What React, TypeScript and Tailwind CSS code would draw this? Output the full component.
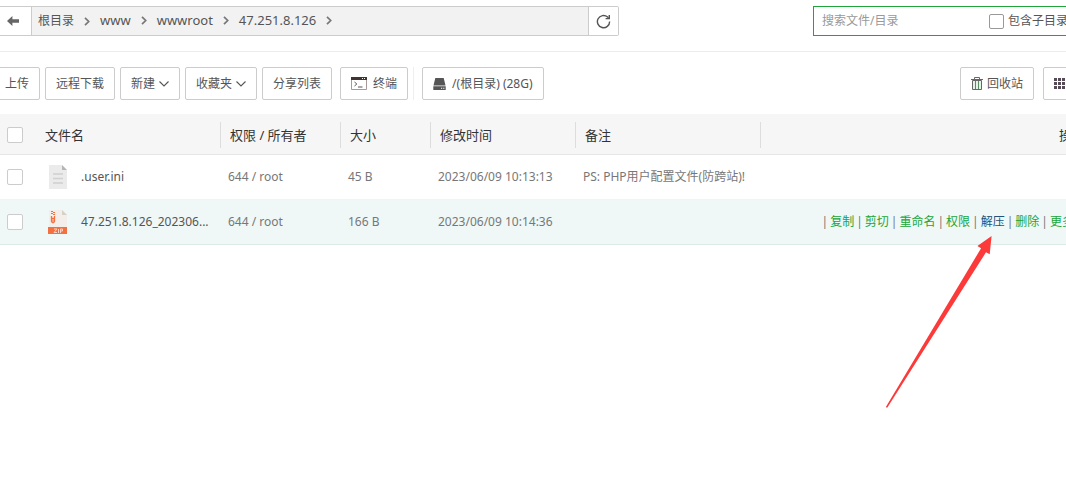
import type { ReactNode } from "react";
import clsx from "clsx";

type FileRow = {
  name: string;
  kind: "text" | "zip";
  owner: string;
  size: string;
  mtime: string;
  note: string;
  active?: boolean;
};

const crumbs = ["根目录", "www", "wwwroot", "47.251.8.126"];

const files: FileRow[] = [
  {
    name: ".user.ini",
    kind: "text",
    owner: "644 / root",
    size: "45 B",
    mtime: "2023/06/09 10:13:13",
    note: "PS: PHP用户配置文件(防跨站)!",
  },
  {
    name: "47.251.8.126_202306...",
    kind: "zip",
    owner: "644 / root",
    size: "166 B",
    mtime: "2023/06/09 10:14:36",
    note: "",
    active: true,
  },
];

const actions = ["复制", "剪切", "重命名", "权限", "解压", "删除", "更多"];

export default function App() {
  return (
    <main className="relative min-h-screen overflow-hidden bg-white font-['Noto_Sans','Noto_Sans_CJK_SC',sans-serif] text-xs text-[#555]">
      <PathBar />
      <Toolbar />
      <FileTable />
      <Arrow />
    </main>
  );
}

function PathBar() {
  return (
    <header className="-mr-10 flex items-start justify-between border-b border-[#ececec] pt-1.5 pb-[15px]">
      <div className="flex h-[30px] w-[619px] rounded-r-xs border border-l-0 border-[#ccc]">
        <button aria-label="返回" className="flex w-8 items-center border-r border-[#ccc] pl-[7px]">
          <svg width="12" height="10" viewBox="0 0 12 10" fill="#666">
            <path d="M0 5 5.4 0v3.3H12v3.4H5.4V10z" />
          </svg>
        </button>
        <nav className="flex flex-1 items-center bg-[#f2f2f2] pl-1.5">
          {crumbs.map((c, i) => (
            <span key={c} className="flex items-center">
              <a href="#" className={i === 0 ? "text-xs" : "text-[13px]"}>
                {c}
              </a>
              <span className="flex w-[26px] justify-center">
                <svg width="6" height="9" viewBox="0 0 6 9" fill="none" stroke="#777" strokeWidth="1.7">
                  <path d="M1 .8 4.7 4.5 1 8.2" />
                </svg>
              </span>
            </span>
          ))}
        </nav>
        <button aria-label="刷新" className="flex w-[30px] items-center justify-center border-l border-[#ccc]">
          <svg width="15" height="15" viewBox="0 0 15 15" fill="none" stroke="#555" strokeWidth="1.4">
            <path d="M13.6 7.5a6.1 6.1 0 1 1-2-4.4l.9.8" />
            <path d="M13.3 1v3.6H9.6" />
          </svg>
        </button>
      </div>
      <div className="flex h-[30px] w-[293px] items-center border border-[#20a53a] pl-2">
        <input
          type="text"
          aria-label="搜索"
          placeholder="搜索文件/目录"
          className="w-[167px] outline-none placeholder:text-[#999]"
        />
        <label className="flex shrink-0 items-center gap-1">
          <CheckBox className="size-[15px] rounded-xs border-[#999]" />
          包含子目录
        </label>
      </div>
    </header>
  );
}

function Toolbar() {
  return (
    <div className="-mr-10 -ml-1.5 flex items-center pt-[15px] pb-3.5">
      <div className="flex gap-[5px]">
        <ToolButton>上传</ToolButton>
        <ToolButton>远程下载</ToolButton>
        <ToolButton>
          新建
          <Caret />
        </ToolButton>
        <ToolButton>
          收藏夹
          <Caret />
        </ToolButton>
        <ToolButton>分享列表</ToolButton>
      </div>
      <div className="ml-2 flex items-center border-r border-[#eee] pr-[5px]">
        <ToolButton>
          <svg width="16" height="13" viewBox="0 0 16 13" className="mr-1.5">
            <path d="M.5.5h15v12H.5z" fill="#fff" stroke="#a99" />
            <path d="M0 0h16v3H0z" fill="#433" />
            <path d="M11 1h1v1h-1zM13 1h1v1h-1z" fill="#fff" />
            <path d="m3.5 5 2.3 2-2.3 2M7 10h4.5" fill="none" stroke="#555" />
          </svg>
          终端
        </ToolButton>
      </div>
      <div className="ml-2">
        <ToolButton>
          <svg width="13" height="12" viewBox="0 0 13 12" fill="#555" className="mr-1.5">
            <path d="M2.3 0h8.4l1.8 7.4H.5zM.3 8.3h12.4V12H.3z" />
            <path d="M8 9.8h1.2v1H8zM10.2 9.8h1.2v1h-1.2z" fill="#fff" />
          </svg>
          /(根目录) (28G)
        </ToolButton>
      </div>
      <div className="ml-auto flex w-[146px] gap-[9px]">
        <ToolButton>
          <svg width="12" height="13" viewBox="0 0 12 13" fill="none" stroke="#666" className="mr-1">
            <path d="M1.5 3.5v9h9v-9z" fill="#e3f3e5" />
            <path d="M0 2.5h12M3.5 2.5v-2h5v2" />
            <path d="M4.5 4v8M7.5 4v8" stroke="#5d8a66" />
          </svg>
          回收站
        </ToolButton>
        <ToolButton label="图标视图">
          <svg width="12" height="11" viewBox="0 0 12 11" fill="#554a55">
            <path d="M0 0h3v3H0zM4 0h3v3H4zM8 0h3v3H8zM0 4h3v3H0zM4 4h3v3H4zM8 4h3v3H8zM0 8h3v3H0zM4 8h3v3H4zM8 8h3v3H8z" />
          </svg>
        </ToolButton>
      </div>
    </div>
  );
}

function ToolButton({ children, label }: { children: ReactNode; label?: string }) {
  return (
    <button
      aria-label={label}
      className="flex h-[33px] shrink-0 items-center rounded-xs border border-[#ccc] bg-white px-2.5 whitespace-nowrap"
    >
      {children}
    </button>
  );
}

function Caret() {
  return (
    <svg width="10" height="6" viewBox="0 0 10 6" fill="none" stroke="#555" strokeWidth="1.1" className="ml-1">
      <path d="m.5.5 4.5 4.5L9.5.5" />
    </svg>
  );
}

function FileTable() {
  return (
    <div className="-mr-5">
      <table className="w-full table-fixed border-collapse">
        <colgroup>
          <col className="w-[35px]" />
          <col className="w-[185px]" />
          <col className="w-[120px]" />
          <col className="w-[90px]" />
          <col className="w-[145px]" />
          <col className="w-[185px]" />
          <col />
        </colgroup>
        <thead>
          <tr className="h-10 border-b border-[#e6e6e6] bg-[#f6f6f6] text-left text-[13px] text-[#333]">
            <th className="pt-[3px] pl-[7px]">
              <CheckBox className="block size-4 rounded-xs border-[#ccc]" label="全选" />
            </th>
            <th className="pt-[3px] pl-2.5 font-normal">文件名</th>
            {["权限 / 所有者", "大小", "修改时间", "备注"].map((h) => (
              <th key={h} className="pt-[3px] font-normal">
                <div className="h-[26px] border-l border-[#ddd] pl-[9px] leading-[26px]">{h}</div>
              </th>
            ))}
            <th className="pt-[3px] font-normal">
              <div className="h-[26px] border-l border-[#ddd] pr-px text-right leading-[26px]">操作</div>
            </th>
          </tr>
        </thead>
        <tbody>
          {files.map((f) => (
            <tr
              key={f.name}
              className={clsx(
                "h-[45px] border-b text-[#777]",
                f.active ? "border-[#dcebe6] bg-[#eff8f7]" : "border-[#f0f4f3]",
              )}
            >
              <td className="pl-[7px]">
                <CheckBox className="block size-4 rounded-xs border-[#ccc]" label={f.name} />
              </td>
              <td className="pl-3">
                <a href="#" className="flex items-center gap-3 whitespace-nowrap text-[#555]">
                  {f.kind === "zip" ? <ZipIcon /> : <TextIcon />}
                  {f.name}
                </a>
              </td>
              <td className="pl-2">{f.owner}</td>
              <td className="pl-2">{f.size}</td>
              <td className="pl-2">{f.mtime}</td>
              <td className="pl-2 whitespace-nowrap">{f.note}</td>
              <td className="pr-3">{f.active && <RowActions />}</td>
            </tr>
          ))}
        </tbody>
      </table>
    </div>
  );
}

function RowActions() {
  return (
    <div className="flex justify-end gap-0.5 whitespace-nowrap">
      {actions.map((a) => (
        <span key={a} className="flex gap-0.5">
          <span>|</span>
          <a href="#" className={a === "解压" ? "text-[#23527c]" : "text-[#20a53a]"}>
            {a}
          </a>
        </span>
      ))}
    </div>
  );
}

function CheckBox({ className, label }: { className: string; label?: string }) {
  return (
    <input type="checkbox" aria-label={label} className={clsx("shrink-0 appearance-none border bg-white", className)} />
  );
}

function TextIcon() {
  return (
    <svg width="22" height="24" viewBox="0 0 22 24" className="shrink-0">
      <path d="M2 0h13l5 5v19H2z" fill="#ebebeb" />
      <path d="M15 0v5h5z" fill="#b5b5b5" />
      <path d="M6 9h10M6 13.5h10M6 18h10" stroke="#d0d0d0" strokeWidth="1.5" />
    </svg>
  );
}

function ZipIcon() {
  return (
    <svg width="22" height="24" viewBox="0 0 22 24" className="shrink-0">
      <path d="M2 0h13l5 5v12H2z" fill="#f4eeeb" />
      <path d="M15 0v5h5z" fill="#d6d0c6" />
      <path d="M1 17h19v7H1z" fill="#f37041" />
      <path d="M4 1h2v1H4zM6 2h2v1H6zM4 3h2v1H4zM6 4h2v1H6z" fill="#f37041" />
      <path d="M4.5 6v5.5l1 1h1l1-1V6M4.5 8.5h3M5.5 10.5h1" fill="none" stroke="#f37041" strokeWidth="1.3" />
      <path d="M7 19h3l-3 3.5h3M11.5 19v4M13.5 23v-4h2v2h-2" fill="none" stroke="#fcd3c3" />
    </svg>
  );
}

// red pointer towards the extract action
function Arrow() {
  return (
    <svg
      width="108"
      height="174"
      viewBox="0 0 108 174"
      fill="#fc3a39"
      className="pointer-events-none absolute top-[235px] right-[73px]"
      aria-hidden
    >
      <path d="M106.6 1 92.4 11l3.7 2.2L1 171.8l.6 1 .8-.3L101 17.3l3.7 2z" />
    </svg>
  );
}
